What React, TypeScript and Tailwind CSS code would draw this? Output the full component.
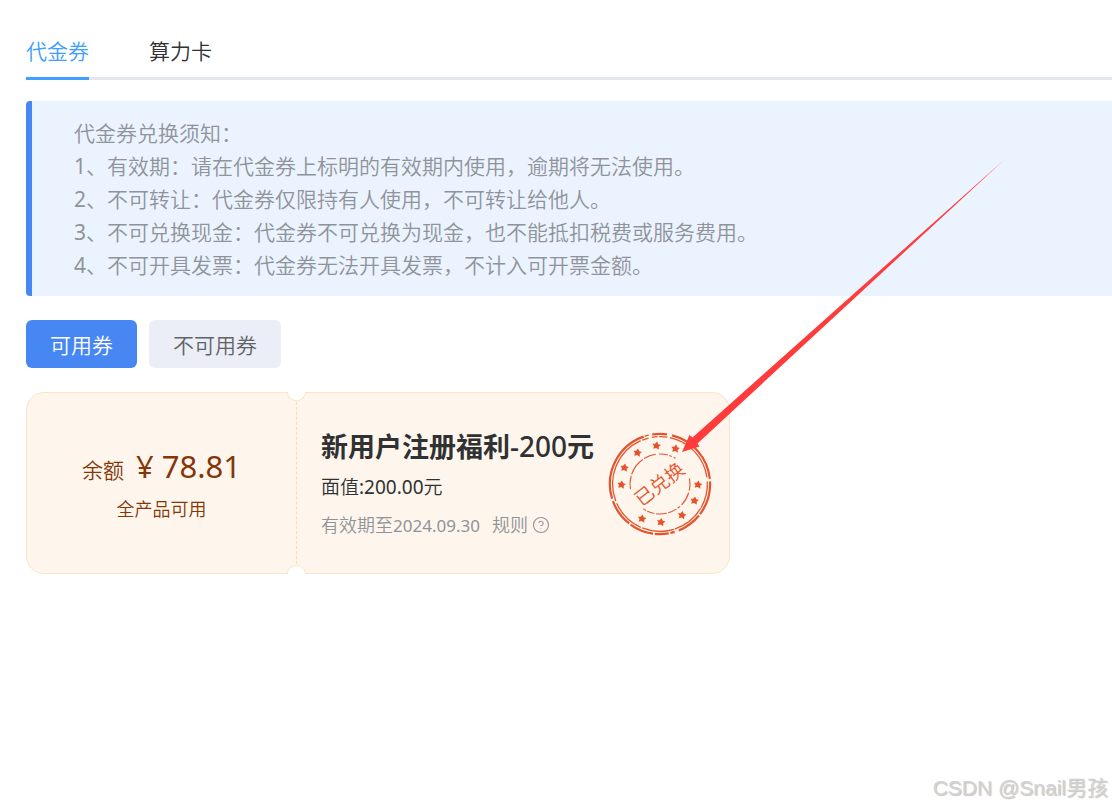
import { useState } from "react";
import { CircleHelp } from "lucide-react";

const notices = [
  ["", "代金券兑换须知："],
  ["1", "、有效期：请在代金券上标明的有效期内使用，逾期将无法使用。"],
  ["2", "、不可转让：代金券仅限持有人使用，不可转让给他人。"],
  ["3", "、不可兑换现金：代金券不可兑换为现金，也不能抵扣税费或服务费用。"],
  ["4", "、不可开具发票：代金券无法开具发票，不计入可开票金额。"],
];

// Star centres inside the 104x104 stamp.
const stars: [number, number][] = [
  [13.5, 52.5], [16.5, 35.5], [29.5, 20.5], [48.5, 13.5], [67.5, 16.5],
  [90, 52.5], [86.5, 68.5], [74, 83], [53, 90], [34, 86.5],
];

// Worn rings: each entry is [radius, stroke width, start angle, end angle], degrees clockwise from 3 o'clock.
const arcs: [number, number, number, number][] = [
  [50.1, 2.2, -76, -6], [50.1, 2.2, -3, 37], [50.1, 2.2, 39, 68], [50.1, 2.2, 73, 78], [50.1, 2.2, 80, 96],
  [50.1, 2.2, 98, 126], [50.1, 2.2, 128, 160], [50.1, 2.2, 163, 251], [50.1, 1.4, 252, 257], [50.1, 2.2, 261, 278],
  [47.4, 1.3, -78, -8], [47.4, 1.3, -3, 30], [47.4, 1.3, 31, 72], [47.4, 1.3, 73, 112],
  [47.4, 1.3, 114, 156], [47.4, 1.3, 159, 246], [47.4, 1.3, 248, 256], [47.4, 1.3, 260, 267], [47.4, 1.3, 269, 279],
  [30, 1.1, -11, 13], [30, 1.1, 17, 44], [30, 1.1, 48, 54], [30, 1.1, 57, 74], [30, 1.1, 77, 98],
  [30, 1.1, 101, 115], [30, 1.1, 118, 124], [30, 1.1, 170, 196], [30, 1.1, 199, 235], [30, 1.1, 238, 262],
  [30, 1.1, 268, 285], [30, 1.1, 288, 293], [30, 1.1, 297, 301],
];

function arcPath(r: number, from: number, to: number) {
  const rad = Math.PI / 180;
  const point = (a: number) => `${52 + r * Math.cos(a * rad)} ${52 + r * Math.sin(a * rad)}`;
  return `M${point(from)}A${r} ${r} 0 0 1 ${point(to)}`;
}

function Stamp() {
  return (
    <div className="grid size-[104px] shrink-0 place-items-center text-[#e5532d]">
      <svg viewBox="0 0 104 104" className="col-start-1 row-start-1 size-[104px]" aria-hidden="true">
        {arcs.map(([r, w, from, to]) => (
          <path key={`${r}-${from}`} d={arcPath(r, from, to)} fill="none" stroke="currentColor" strokeWidth={w} />
        ))}
        {stars.map(([x, y]) => (
          <path
            key={`${x}-${y}`}
            transform={`translate(${x} ${y}) rotate(8)`}
            d="M0-4 1.6-1.6 4.3-1.2 2.4 .9 2.8 3.8 0 2.6-2.8 3.8-2.4 .9-4.3-1.2-1.6-1.6Z"
            fill="currentColor"
          />
        ))}
      </svg>
      <span className="col-start-1 row-start-1 -rotate-38 text-[19px] leading-6 whitespace-nowrap">已兑换</span>
    </div>
  );
}

function Notch({ className }: { className: string }) {
  return <span className={`absolute -left-[9px] h-[9px] w-[19px] border-[#fae4c6] bg-white ${className}`} />;
}

function Coupon() {
  return (
    <article className="relative mt-6 flex min-h-[182px] max-w-[704px] rounded-[18px] border border-[#fae4c6] bg-[#fef6ec]">
      <div className="flex w-[269px] shrink-0 flex-col items-center justify-center pt-1.5 text-[#843608]">
        <p className="flex items-baseline gap-3 leading-[42px]">
          <span className="text-[21px]">余额</span>
          <span className="text-[31px] font-normal">¥ 78.81</span>
        </p>
        <p className="text-lg leading-9">全产品可用</p>
      </div>
      <div className="relative -my-px w-px shrink-0">
        <div className="h-full border-l border-dashed border-[#fcdcae]" />
        <Notch className="top-0 rounded-b-full border-x border-b" />
        <Notch className="bottom-0 rounded-t-full border-x border-t" />
      </div>
      <div className="flex grow items-center justify-between pt-0.5 pr-[17px] pl-6">
        <div className="whitespace-nowrap">
          <h2 className="text-[27px] leading-[42px] font-bold text-[#303133]">
            新用户注册福利<span className="text-[28px] font-medium">-200</span>元
          </h2>
          <p className="text-[19px] leading-[39px] text-[#303133]">
            面值<span className="font-normal">:200.00</span>元
          </p>
          <p className="flex items-center text-lg leading-9 text-[#909399]">
            <span>
              有效期至<span className="text-[17px] font-normal">2024.09.30</span>
            </span>
            <button type="button" className="ml-3 flex items-center gap-1">
              规则
              <CircleHelp className="size-[18px]" strokeWidth={1.5} />
            </button>
          </p>
        </div>
        <Stamp />
      </div>
    </article>
  );
}

export default function App() {
  const [tab, setTab] = useState("代金券");
  const [usable, setUsable] = useState(true);

  return (
    <main className="relative min-h-screen overflow-hidden bg-white pt-6 pl-[26px] font-['Noto_Sans','Noto_Sans_CJK_SC',sans-serif] text-[21px] font-[350]">
      <nav className="flex gap-[60px] border-b-[3px] border-[#e4e7ed]">
        {["代金券", "算力卡"].map((name) => (
          <button
            key={name}
            type="button"
            onClick={() => setTab(name)}
            className={`-mb-[3px] h-14 border-b-[3px] pt-0.5 ${
              tab === name ? "border-[#409eff] text-[#409eff]" : "border-transparent text-[#303133]"
            }`}
          >
            {name}
          </button>
        ))}
      </nav>

      <section className="mt-[21px] rounded-l border-l-[6px] border-[#4787f3] bg-[#ebf3ff] pt-4 pb-[14px] pl-[42px] leading-[33px] text-[#909399]">
        {notices.map(([index, text]) => (
          <p key={text}>
            <span className="font-normal">{index}</span>
            {text}
          </p>
        ))}
      </section>

      <div className="mt-6 flex gap-3">
        <button
          type="button"
          onClick={() => setUsable(true)}
          className={`h-12 rounded-md px-6 pt-1 ${usable ? "bg-[#4787f3] text-white" : "bg-[#ebeef6] text-[#606266]"}`}
        >
          可用券
        </button>
        <button
          type="button"
          onClick={() => setUsable(false)}
          className={`h-12 rounded-md px-6 pt-1 ${usable ? "bg-[#ebeef6] text-[#606266]" : "bg-[#4787f3] text-white"}`}
        >
          不可用券
        </button>
      </div>

      <Coupon />

      <svg viewBox="0 0 324 294" className="pointer-events-none absolute top-[159px] left-[682px] h-[294px] w-[324px]" aria-hidden="true">
        <path d="M0 293 7.5 276 10.5 278.5 323 0 15.5 284.5 17.5 287.5Z" fill="#ff3b3b" />
      </svg>

      <p className="absolute right-1 bottom-1 font-['Liberation_Sans','Noto_Sans_CJK_SC',sans-serif] leading-8 text-[#d2d2d2] [text-shadow:1px_1px_1px_#c4c4c4]">
        CSDN @Snail男孩
      </p>
    </main>
  );
}
